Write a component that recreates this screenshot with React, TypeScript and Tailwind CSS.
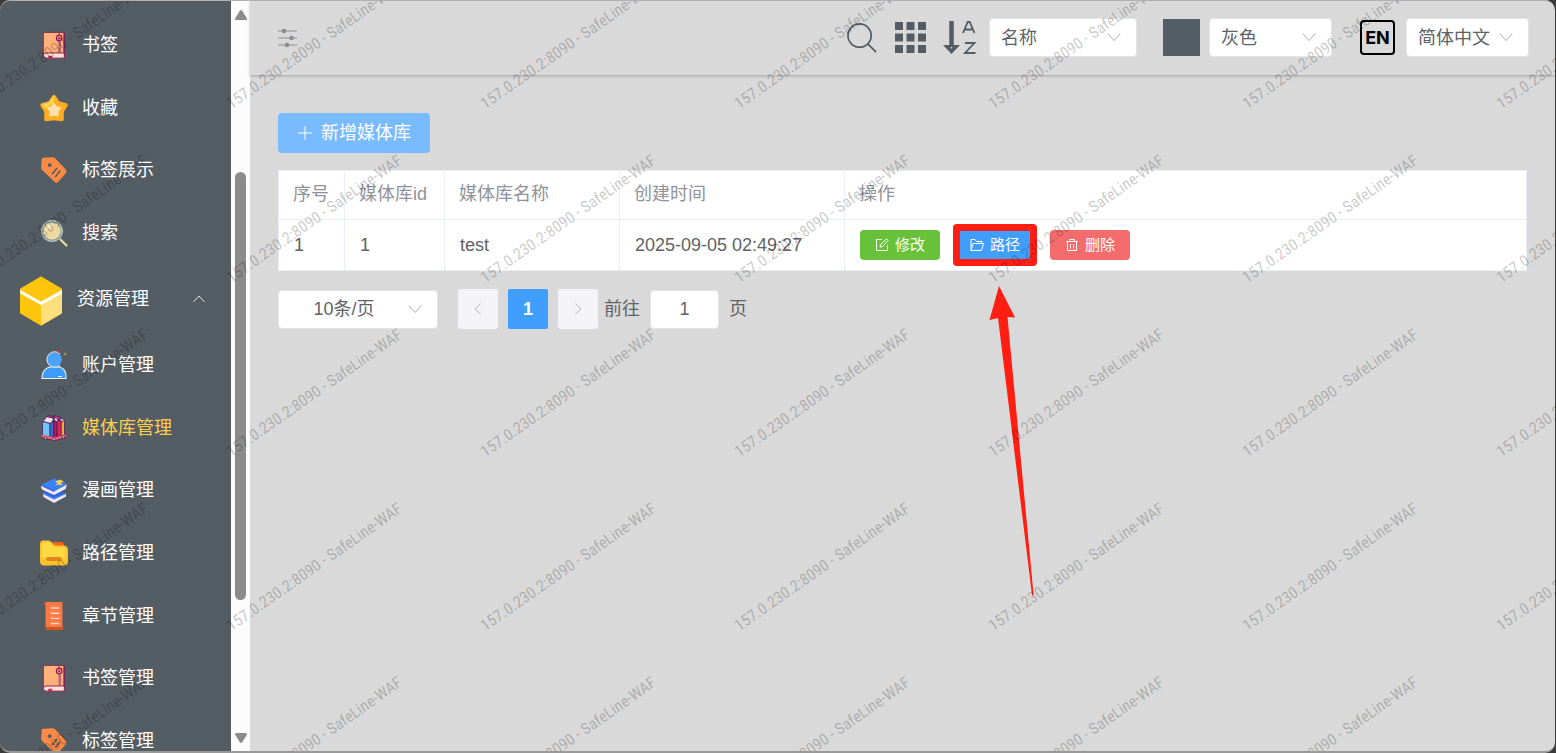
import React, { useState } from 'react';

type IconProps = { className?: string };

const BookmarkIcon: React.FC<IconProps> = ({ className }) => (
  <svg viewBox="0 0 28 32" className={className} fill="none">
    <path d="M3 3h21v23H3z" fill="#ffb17a" />
    <path d="M2.500 27V4.500Q2.500 2.500 4.500 2.500H25" stroke="#8e2a55" strokeWidth="1" />
    <path d="M25 3v22" stroke="#7a1f5c" strokeWidth="1.200" />
    <path d="M21 12v12" stroke="#b0567a" strokeWidth="0.900" />
    <circle cx="19.500" cy="8.500" r="3" fill="#f58a8a" stroke="#8e1450" strokeWidth="1.200" />
    <circle cx="19.500" cy="8.500" r="1" fill="#8e1450" />
    <path d="M19.500 3v2.500M19.500 12v12" stroke="#8e1450" strokeWidth="0.800" />
    <path d="M25 24.500H5.500a2.600 2.600 0 0 0 0 5.500H25z" fill="#ffe3d3" stroke="#8e1450" strokeWidth="1" />
    <path d="M8 27.500h4v3l-2-1-2 1z" fill="#d6224f" />
  </svg>
);

const StarIcon: React.FC<IconProps> = ({ className }) => (
  <svg viewBox="-1 -1 30 30" className={className} strokeLinejoin="round">
    <path d="M14 2.500 18.500 9 26 11 22 17.500v8L14 24.500 6 25.500v-8L2 11l7.500-2z" fill="#fdae22" stroke="#fdae22" strokeWidth="3.500" />
    <path d="M14 2 9.500 8.500 2.500 10.500 5 14 13 9z" fill="#ffd34e" stroke="#ffd34e" strokeWidth="1" />
    <path d="M14 10l2 3.300 4 .700-2.500 3.200v4.300L14 20.300l-3.500 1.200v-4.300L8 14l4-.700z" fill="#fee0ae" stroke="#fee0ae" strokeWidth="2" />
  </svg>
);

const TagIcon: React.FC<IconProps> = ({ className }) => (
  <svg viewBox="0 0 28 28" className={className} fill="none" strokeLinecap="round">
    <path d="M4 2.500 12.500 2Q14 2 15 3L25 13.500q1.500 1.800 0 3.500l-7 8q-1.800 1.800-3.500 0L3 14Q2 13 2 11.500L2.500 4Q2.600 2.600 4 2.500z" fill="#ff8a45" />
    <circle cx="10" cy="9.500" r="1.800" fill="#545c64" />
    <path d="m12.500 17.500 4-5M15.500 20l4-5" stroke="#545c64" strokeWidth="1.500" />
  </svg>
);

const MagnifierIcon: React.FC<IconProps> = ({ className }) => (
  <svg viewBox="-1 -1 30 30" className={className} fill="none" strokeLinecap="round">
    <path d="m20 20 6.500 6.500" stroke="#e5dca0" strokeWidth="2.200" />
    <circle cx="12" cy="12" r="10" fill="#ecd9a0" stroke="#6f8790" strokeWidth="2.400" />
    <circle cx="12" cy="12" r="10.300" stroke="#d6e3d0" strokeWidth="0.900" />
    <path d="M6 12q1-5 6-6" stroke="#fff3cf" strokeWidth="1.800" />
  </svg>
);

const CubeIcon: React.FC<IconProps> = ({ className }) => (
  <svg viewBox="0 0 44 50" className={className} strokeLinejoin="round">
    <path d="M22 2 41.500 13.500v23L22 48 2.500 36.500v-23z" fill="#fdc50c" stroke="#fdc50c" strokeWidth="3" />
    <path d="M22 27 43 15.500V36.500q0 .8-.8 1.300L22 49.500z" fill="#ffdf7c" />
    <path d="M1.200 14 22 25.500 42.800 14v3.500L22 29 1.200 17.500z" fill="#fff" />
  </svg>
);

const UserIcon: React.FC<IconProps> = ({ className }) => (
  <svg viewBox="0 0 28 30" className={className} fill="none">
    <path d="M2 28.500q0-12 12.500-12T26 28.500z" fill="#3d9cf8" stroke="#e8f3ff" strokeWidth="1.100" />
    <circle cx="14.500" cy="9.500" r="7.300" fill="#4ba3fa" />
    <path d="M20 3.800a7.800 7.800 0 1 0 0 11.500" stroke="#e8f3ff" strokeWidth="1" />
    <path d="M18 26.500h4" stroke="#fff" />
    <circle cx="19" cy="1.500" r="1.200" fill="#e0244b" />
    <path d="m24 3 2.500 2.500m0-2.500L24 5.500" stroke="#b0b04a" strokeWidth="1" />
  </svg>
);

const LibraryIcon: React.FC<IconProps> = ({ className }) => (
  <svg viewBox="-2 -2 30 30" className={className} stroke="#3a1658" strokeWidth="0.700" strokeLinejoin="round">
    <path d="M.500 19.500 3 17.500h20l2.500 1.500v3.500L14 25.500.500 23z" fill="#f0606e" />
    <path d="m20 5 3.500 1.500V20L20 21z" fill="#f6a83a" />
    <path d="M15 4.500 20 6v15l-4 1z" fill="#d8285e" />
    <path d="m12 6 4 1v15.500l-4 .500z" fill="#a81c58" />
    <path d="M2 6.500 6 1.500l7 2-3 5z" fill="#fbe3ea" />
    <path d="m6 1.500 2-1 7 2-2 1zM11.500 1.500 14 .500l6 2-3 2.500-2-2.500z" fill="#e0447a" />
    <path d="m13 3.500 2-1 2 2.500-2 2zM18 3l5 1.500.500 2L20 6z" fill="#fbe3ea" />
    <path d="M1.500 6.500 9 8.500v14l-7.500-2z" fill="#72c4f8" />
    <path d="M9 8.500 12.500 6v15L9 22.500z" fill="#3470d0" />
    <path d="M.500 20.500 9 22.500l4.500 1 12-3" fill="none" stroke="#f0606e" strokeWidth="2" />
    <circle cx="4.500" cy="23" r="1.200" fill="#ffd9dd" />
    <circle cx="13" cy="24.500" r="1.200" fill="#ffd9dd" />
    <circle cx="22.500" cy="22" r="1.200" fill="#ffd9dd" />
  </svg>
);

const ComicIcon: React.FC<IconProps> = ({ className }) => (
  <svg viewBox="-1 -2 30 30" className={className}>
    <path d="m3 16 11-4 12 4.500-12 6z" fill="#2f66dd" />
    <path d="m3 16 11 5.500 12-5v3L14 26 3.500 20z" fill="#f1e6f6" />
    <path d="m3 15.500 11 5 12-5V17l-12 5.500L3 17z" fill="#3f7df2" />
    <path d="m1 8 13-6.500L27 7 14 14.500z" fill="#3b82f6" />
    <path d="m1 8 13 6.500L27 7.500l-1.500 4.500L14 18 2 12.500Q.500 10.500 1 8z" fill="#f6e9f4" />
    <path d="m1 7.500 13 6V15L1 9z" fill="#2f6de6" />
    <path d="m15 4.500 5-2 4 2-2.500 1v3l-3-1-3 1 2-2.500z" fill="#fbd04b" />
  </svg>
);

const FolderIcon: React.FC<IconProps> = ({ className }) => (
  <svg viewBox="-1 -2 30 30" className={className}>
    <path d="M13 2h8q3 0 3 3v5H13z" fill="#f4641c" />
    <path d="M0 4q0-3.500 3.500-3.500h5q2.500 0 4 2.500 1.300 2.500 4 2.500h7Q28 5.500 28 10v11q0 4.500-4.500 4.500h-19Q0 25.500 0 21z" fill="#fdc22c" />
    <path d="M2 5q.500-3 3-3h3.500q2 0 3 2.500 1.500 2.800 4 2.800h7q3 .200 3 4V18q-11 5-23.500 0z" fill="#ffd943" />
    <rect x="6" y="17" width="16" height="4" rx="2" fill="#e5861b" />
  </svg>
);

const ChapterIcon: React.FC<IconProps> = ({ className }) => (
  <svg viewBox="1 0 24 32" className={className} fill="none">
    <path d="M2 3.500q0-2 2-2h4v3H2z" fill="#c6501f" />
    <path d="M4 1h18v27H4z" fill="#ff7a45" />
    <path d="M4 28h19.500q-.500 3-3 3H4z" fill="#d6551d" />
    <path d="M9.500 7.500h9M9.500 13h9M9.500 18.500h9M9.500 24h9" stroke="#ffd8bd" strokeWidth="1.500" />
  </svg>
);

const ArrowDown: React.FC<IconProps> = ({ className }) => (
  <svg viewBox="0 0 14 14" className={className} fill="none" stroke="currentColor" strokeWidth="1" strokeLinecap="round" strokeLinejoin="round">
    <path d="m1 4 6 6.500L13 4" />
  </svg>
);

const OperationIcon: React.FC<IconProps> = ({ className }) => (
  <svg viewBox="0 0 20 20" className={className} stroke="currentColor" fill="currentColor">
    <path d="M0 3h19M0 10h19M0 17h19" />
    <g stroke="none">
      <circle cx="6" cy="3" r="2.300" />
      <circle cx="13.500" cy="10" r="2.300" />
      <circle cx="9" cy="17" r="2.300" />
    </g>
  </svg>
);

const SearchIcon: React.FC<IconProps> = ({ className }) => (
  <svg viewBox="0 0 32 32" className={className} fill="none" stroke="currentColor" strokeWidth="1.800">
    <circle cx="13" cy="14" r="12" />
    <path d="m21.500 22.500 8.500 8.500" />
  </svg>
);

const GridIcon: React.FC<IconProps> = ({ className }) => (
  <svg viewBox="0 0 31 31" className={className} fill="currentColor">
    {[0, 11.5, 23].map((y) => [0, 11.5, 23].map((x) => <rect key={`${x}-${y}`} x={x} y={y} width="8" height="8" />))}
  </svg>
);

const SortIcon: React.FC<IconProps> = ({ className }) => (
  <svg viewBox="0 0 34 34" className={className} fill="none" stroke="currentColor">
    <path d="M8.500 0V26" strokeWidth="4.500" />
    <path d="M0 24h4.500l2 0 2 4 2-4h6.500L8.500 33z" fill="currentColor" stroke="none" />
    <path d="m20 12 4.700-11h2L31.500 12M22 8.500h7.500" strokeWidth="1.800" />
    <path d="M22 22h9.500L22 32h10.500" strokeWidth="1.800" />
  </svg>
);

const EditIcon: React.FC<IconProps> = ({ className }) => (
  <svg viewBox="0 0 14 14" className={className} fill="none" stroke="currentColor" strokeLinejoin="round">
    <path d="M7 1.500H1.500v11h11V7" />
    <path d="m5 9 .500-2.500L11.500 1l1.500 1.500-5.500 6z" />
  </svg>
);

const FolderOpenedIcon: React.FC<IconProps> = ({ className }) => (
  <svg viewBox="0 0 14 14" className={className} fill="none" stroke="currentColor" strokeLinejoin="round">
    <path d="M1 12.500v-11h4l1.500 2H12v2" />
    <path d="m1 12.500 2-7h10.500l-2 7z" />
  </svg>
);

const DeleteIcon: React.FC<IconProps> = ({ className }) => (
  <svg viewBox="0 0 14 14" className={className} fill="none" stroke="currentColor">
    <path d="M1 3.500h12M4.500 3.500v-2h5v2M2.500 3.500v9h9v-9M5.500 6v4.500M8.500 6v4.500" />
  </svg>
);

const topMenu = [
  { label: '书签', Icon: BookmarkIcon },
  { label: '收藏', Icon: StarIcon },
  { label: '标签展示', Icon: TagIcon },
  { label: '搜索', Icon: MagnifierIcon },
];

const resourceMenu = [
  { label: '账户管理', Icon: UserIcon },
  { label: '媒体库管理', Icon: LibraryIcon, active: true },
  { label: '漫画管理', Icon: ComicIcon },
  { label: '路径管理', Icon: FolderIcon },
  { label: '章节管理', Icon: ChapterIcon },
  { label: '书签管理', Icon: BookmarkIcon },
  { label: '标签管理', Icon: TagIcon },
];

const libraries = [{ id: 1, name: 'test', createdAt: '2025-09-05 02:49:27' }];

const MenuItem: React.FC<{ label: string; Icon: React.FC<IconProps>; active?: boolean }> = ({ label, Icon, active }) => (
  <a href="#" className={`flex flex-1 items-center gap-3 pl-[38px] ${active ? 'text-[#ffd04b]' : 'text-white'}`}>
    <Icon className="h-8 w-8 py-px" />
    <span>{label}</span>
  </a>
);

const SelectBox: React.FC<{ label: string; options: string[]; className: string; center?: boolean }> = ({ label, options, className, center }) => (
  <div className={`relative ${className}`}>
    <select
      aria-label={label}
      className={`h-[39px] w-full appearance-none rounded-[4px] border border-[#e4e5e8] bg-white text-[#606266] outline-none ${center ? 'pr-7 text-center' : 'px-[11px]'}`}
    >
      {options.map((option) => (
        <option key={option}>{option}</option>
      ))}
    </select>
    <ArrowDown className="pointer-events-none absolute top-3 right-4 h-3.5 w-3.5 text-[#a8abb2]" />
  </div>
);

const Sidebar: React.FC = () => (
  <aside className="w-[231px] shrink-0 overflow-hidden bg-[#545c64]">
    <nav className="pt-3.5">
      <div className="flex h-[250px] flex-col">
        {topMenu.map((item) => (
          <MenuItem key={item.label} {...item} />
        ))}
      </div>
      <button className="flex h-[70px] w-full items-center pr-[26px] pl-[19px] text-white">
        <CubeIcon className="mt-1 h-[50px] w-11" />
        <span className="ml-3.5 flex-1 text-left">资源管理</span>
        <ArrowDown className="h-3 w-3 rotate-180" />
      </button>
      <div className="flex h-[438px] flex-col">
        {resourceMenu.map((item) => (
          <MenuItem key={item.label} {...item} />
        ))}
      </div>
    </nav>
  </aside>
);

const ScrollTrack: React.FC = () => (
  <div className="flex w-[19px] shrink-0 flex-col items-center bg-[#fcfcfc] pt-2.5 pb-2">
    <svg viewBox="0 0 12 10" className="h-2.5 w-3" fill="#8b8b8b">
      <path d="M6 0q.800 0 1.200.700L12 8.500Q12 10 11 10H1Q0 10 0 8.500L4.800.700Q5.200 0 6 0z" />
    </svg>
    <div className="flex w-full flex-1 flex-col items-center">
      <div className="grow-[152]" />
      <div className="w-[11px] grow-[428] rounded-full bg-[#8b8b8b]" />
      <div className="grow-[133]" />
    </div>
    <svg viewBox="0 0 12 10" className="h-2.5 w-3 rotate-180" fill="#8b8b8b">
      <path d="M6 0q.800 0 1.200.700L12 8.500Q12 10 11 10H1Q0 10 0 8.500L4.800.700Q5.200 0 6 0z" />
    </svg>
  </div>
);

const Header: React.FC = () => (
  <header className="flex h-[75px] items-center justify-between pr-[26px] pl-7 text-[#545c64] shadow-[0_1px_3px_rgba(0,0,0,0.25)]">
    <button aria-label="菜单" className="text-[#8a8d91]">
      <OperationIcon className="h-5 w-5" />
    </button>
    <div className="flex items-center">
      <div className="flex items-center gap-[17px]">
        <button aria-label="搜索"><SearchIcon className="h-[31px] w-[31px]" /></button>
        <button aria-label="布局"><GridIcon className="h-[31px] w-[31px]" /></button>
        <button aria-label="排序"><SortIcon className="h-[34px] w-[34px]" /></button>
      </div>
      <SelectBox label="排序字段" options={['名称', '创建时间']} className="ml-3 w-[148px]" />
      <div className="ml-[26px] h-[37px] w-[37px] bg-[#545c64]" />
      <SelectBox label="主题" options={['灰色', '白色']} className="ml-[9px] w-[123px]" />
      <div className="ml-7 flex h-[35px] w-[35px] items-center justify-center rounded-[4px] border-2 border-black font-['Inter',sans-serif] text-lg leading-none font-bold text-black">
        EN
      </div>
      <SelectBox label="语言" options={['简体中文', 'English']} className="ml-[11px] w-[123px]" />
    </div>
  </header>
);

const actionClass = 'flex h-[30px] w-20 items-center justify-center gap-1.5 rounded-[4px] text-[15px] text-white';
const cellClass = 'border border-[#ebeef5] px-[15px]';

const LibraryTable: React.FC = () => (
  <table className="mt-[17px] w-full table-fixed border border-[#ebeef5] bg-white text-left">
    <colgroup>
      <col className="w-[66px]" />
      <col className="w-[100px]" />
      <col className="w-[175px]" />
      <col className="w-[225px]" />
      <col />
    </colgroup>
    <thead>
      <tr className="h-[49px] text-[#909399]">
        {['序号', '媒体库id', '媒体库名称', '创建时间', '操作'].map((title) => (
          <th key={title} className="border border-[#ebeef5] px-3.5 pb-0.5 font-normal whitespace-nowrap">{title}</th>
        ))}
      </tr>
    </thead>
    <tbody>
      {libraries.map((lib, index) => (
        <tr key={lib.id} className="h-[51px] text-[#606266]">
          <td className={cellClass}>{index + 1}</td>
          <td className={cellClass}>{lib.id}</td>
          <td className={cellClass}>{lib.name}</td>
          <td className={cellClass}>{lib.createdAt}</td>
          <td className={cellClass}>
            <div className="flex gap-[15px]">
              <button className={`${actionClass} bg-[#67c23a]`}>
                <EditIcon className="h-3.5 w-3.5" />
                修改
              </button>
              <div className="relative">
                <button className={`${actionClass} bg-[#409eff]`}>
                  <FolderOpenedIcon className="h-3.5 w-3.5" />
                  路径
                </button>
                {/* highlight frame and pointer for the path button */}
                <div className="pointer-events-none absolute -inset-x-0.5 -inset-y-1.5 rounded-[4px] border-[7px] border-[#ff1e12]" />
                <svg viewBox="0 0 50 312" className="pointer-events-none absolute top-14 left-[34px] h-[312px] w-[50px] max-w-none" fill="#ff1e12">
                  <path d="M10 0 26 31.500 18.500 31 44.500 308q0 2-1.500 1L9 32 .500 34z" />
                </svg>
              </div>
              <button className={`${actionClass} bg-[#f56c6c]`}>
                <DeleteIcon className="h-3.5 w-3.5" />
                删除
              </button>
            </div>
          </td>
        </tr>
      ))}
    </tbody>
  </table>
);

const Pagination: React.FC = () => {
  const [page, setPage] = useState('1');
  const stepClass = 'flex h-10 w-10 items-center justify-center rounded-[2px] bg-[#f4f4f8] text-[#a8abb2]';

  return (
    <div className="mt-[18px] flex items-center text-[#606266]">
      <SelectBox label="每页条数" options={['10条/页', '20条/页']} className="w-40" center />
      <div className="ml-5 flex gap-2.5">
        <button aria-label="上一页" className={stepClass}>
          <ArrowDown className="h-3 w-3 rotate-90" />
        </button>
        <button className="h-10 w-10 rounded-[2px] bg-[#409eff] font-bold text-white">1</button>
        <button aria-label="下一页" className={stepClass}>
          <ArrowDown className="h-3 w-3 -rotate-90" />
        </button>
      </div>
      <label className="ml-1.5 flex items-center gap-2.5">
        前往
        <input
          value={page}
          onChange={(e) => setPage(e.target.value)}
          className="h-[39px] w-[69px] rounded-[4px] border border-[#e4e5e8] bg-white text-center outline-none"
        />
        页
      </label>
    </div>
  );
};

const Watermark: React.FC = () => (
  <div
    aria-hidden="true"
    className="pointer-events-none absolute -top-[62px] -left-[21px] grid auto-rows-[174px] grid-cols-[repeat(7,254px)] font-['Liberation_Sans_Narrow','Roboto_Condensed','Liberation_Sans',sans-serif] text-base leading-none text-black/[0.22]"
  >
    {Array.from({ length: 35 }, (_, i) => (
      <div key={i} className="flex items-end">
        <span className="origin-bottom-left -rotate-[35deg] whitespace-nowrap">157.0.230.2:8090 - SafeLine-WAF</span>
      </div>
    ))}
  </div>
);

const App: React.FC = () => (
  <div className="h-screen bg-[#3a3a3a] pr-px font-['Liberation_Sans','Noto_Sans_CJK_SC',sans-serif] text-lg leading-6">
    <div className="relative flex h-full overflow-hidden rounded-[10px] border-b-2 border-b-[#999] bg-[#d9d9d9]">
      <Sidebar />
      <ScrollTrack />
      <main className="min-w-0 flex-1">
        <Header />
        <section className="px-7 pt-[38px]">
          <button className="flex h-10 items-center gap-2 rounded-[4px] bg-[#79bbff] px-[19px] text-white">
            <svg viewBox="0 0 16 16" className="h-4 w-4" stroke="currentColor">
              <path d="M8 1v14M1 8h14" />
            </svg>
            新增媒体库
          </button>
          <LibraryTable />
          <Pagination />
        </section>
      </main>
      <Watermark />
      <div className="pointer-events-none absolute inset-0 rounded-[10px] border-t border-t-[#b0b0b0]" />
    </div>
  </div>
);

export default App;
